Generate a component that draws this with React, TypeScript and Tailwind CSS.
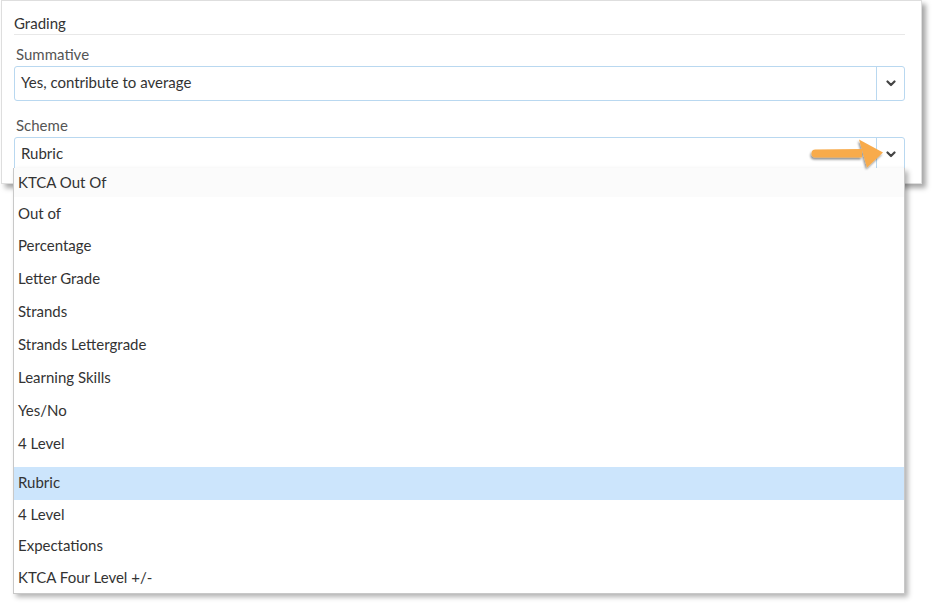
import React from "react";

type Option = { label: string; h: string; selected?: boolean; faint?: boolean };

const options: Option[] = [
  { label: "KTCA Out Of", h: "h-[29px]", faint: true },
  { label: "Out of", h: "h-[32px]" },
  { label: "Percentage", h: "h-[33px]" },
  { label: "Letter Grade", h: "h-[33px]" },
  { label: "Strands", h: "h-[33px]" },
  { label: "Strands Lettergrade", h: "h-[33px]" },
  { label: "Learning Skills", h: "h-[33px]" },
  { label: "Yes/No", h: "h-[33px]" },
  { label: "4 Level", h: "h-[33px]" },
  { label: "Rubric", h: "h-[33px]", selected: true },
  { label: "4 Level", h: "h-[29px]" },
  { label: "Expectations", h: "h-[32px]" },
  { label: "KTCA Four Level +/-", h: "h-[32px]" },
];

function Chevron() {
  return (
    <svg width="10" height="7" viewBox="0 0 10 7">
      <path d="M1.5 1.5 L5 5 L8.5 1.5" fill="none" stroke="#444" strokeWidth="2.2" strokeLinecap="round" strokeLinejoin="round" />
    </svg>
  );
}

function Select({ value }: { value: string }) {
  return (
    <div className="flex h-[35px] rounded-[3px] border border-[#b9d8f0] bg-white">
      <div className="flex flex-1 items-center pb-[2px] pl-[6px] text-[15px] text-[#333]">{value}</div>
      <div className="flex w-[28px] items-center justify-center border-l border-[#b9d8f0]">
        <Chevron />
      </div>
    </div>
  );
}

function Arrow() {
  return (
    <svg width="90" height="40" viewBox="0 0 90 40" className="absolute left-[806px] top-[136px]">
      <defs>
        <filter id="sh" x="-20%" y="-20%" width="140%" height="160%">
          <feDropShadow dx="-1" dy="2" stdDeviation="1.2" floodColor="#000" floodOpacity="0.45" />
        </filter>
      </defs>
      <g filter="url(#sh)">
        <path d="M9.5 13.5 L56 13 L56 21.5 L9.5 21.5 A4 4 0 0 1 9.5 13.5 Z" fill="#f8ab4b" />
        <path d="M53 3.5 L77 16.5 L61 31.5 Z" fill="#f8ab4b" />
      </g>
    </svg>
  );
}

export default function App() {
  return (
    <div className="relative h-[604px] w-[932px] overflow-hidden bg-white font-['Lato','Open_Sans',sans-serif]">
      <div className="ml-[1px] h-[184px] w-[921px] border border-[#dedede] bg-white shadow-[4px_4px_5px_rgba(0,0,0,0.35)]">
        <div className="pl-[12px] pr-[16px]">
          <div className="h-[34px] border-b border-[#e8e8e8] pt-[13px] text-[15px] leading-[18px] text-[#333]">
            Grading
          </div>
          <div className="mt-[10px] pl-[2px] text-[15px] leading-[19px] text-[#555]">Summative</div>
          <div className="mt-[2px]">
            <Select value="Yes, contribute to average" />
          </div>
          <div className="mt-[15px] pl-[2px] text-[15px] leading-[19px] text-[#555]">Scheme</div>
          <div className="mt-[2px]">
            <Select value="Rubric" />
          </div>
        </div>
      </div>

      <div className="absolute left-[903px] top-[168px] h-[25px] w-[2px] bg-[#1f78c8]" />

      <div className="absolute left-[13px] top-[168px] w-[892px] border-x border-b border-[#c8c8c8] bg-white shadow-[3px_3px_5px_rgba(0,0,0,0.3)]">
        {options.map((o, i) => (
          <div
            key={i}
            className={`flex items-center pl-[4px] text-[15px] text-[#333] ${o.h} ${
              o.selected ? "mt-[7px] bg-[#cce5fc] pb-[3px]" : o.faint ? "bg-[#fbfbfb]" : ""
            }`}
          >
            {o.label}
          </div>
        ))}
      </div>

      <Arrow />
    </div>
  );
}
